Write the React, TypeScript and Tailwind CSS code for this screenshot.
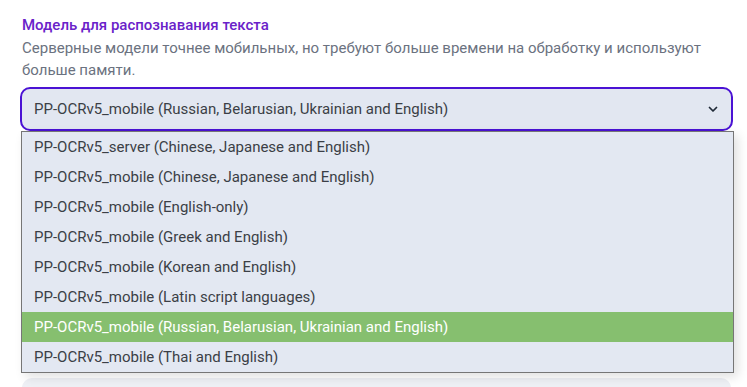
import React from 'react';

const options = [
  'PP-OCRv5_server (Chinese, Japanese and English)',
  'PP-OCRv5_mobile (Chinese, Japanese and English)',
  'PP-OCRv5_mobile (English-only)',
  'PP-OCRv5_mobile (Greek and English)',
  'PP-OCRv5_mobile (Korean and English)',
  'PP-OCRv5_mobile (Latin script languages)',
  'PP-OCRv5_mobile (Russian, Belarusian, Ukrainian and English)',
  'PP-OCRv5_mobile (Thai and English)',
];

const selected = 6;

export default function App() {
  return (
    <div className="h-[387px] bg-white font-['Roboto','Noto_Sans',sans-serif] text-[15px] overflow-hidden">
      <div className="pl-[20px] pr-[14px] pt-[14px]">
        {/* Заголовок */}
        <div className="pl-[2px] text-[15px] leading-[22px] font-medium text-[#6a22c9]">
          Модель для распознавания текста
        </div>
        <div className="pl-[2px] mt-[1px] text-[15px] leading-[22px] text-[#6b7280]">
          Серверные модели точнее мобильных, но требуют больше времени на обработку и используют больше памяти.
        </div>

        {/* Селект */}
        <div className="relative mt-[6px]">
          <div className="flex h-[44px] items-center justify-between rounded-[10px] border-2 border-[#4a12d4] bg-[#e2e7f1] pl-[12px] pr-[12px] text-[#3b3f46]">
            <span>{options[selected]}</span>
            <svg width="12" height="12" viewBox="0 0 24 24" fill="none" stroke="#1f2937" strokeWidth="3.5" strokeLinecap="round" strokeLinejoin="round">
              <path d="M5 9l7 7 7-7" />
            </svg>
          </div>

          <div className="absolute left-[1px] right-[-1px] top-[44px] z-10 border border-[#767676] bg-[#e3e8f2] shadow-[4px_4px_10px_rgba(0,0,0,0.12)]">
            {options.map((opt, i) => (
              <div
                key={opt}
                className={`flex h-[30px] items-center pl-[12px] ${
                  i === selected ? 'bg-[#86bf6f] text-white' : 'text-[#3b3f46]'
                }`}
              >
                {opt}
              </div>
            ))}
          </div>
        </div>

        {/* Следующее поле */}
        <div className="mt-[247px] ml-[2px] mr-[2px] h-[40px] rounded-[10px] bg-[#eef0f5]" />
      </div>
    </div>
  );
}
